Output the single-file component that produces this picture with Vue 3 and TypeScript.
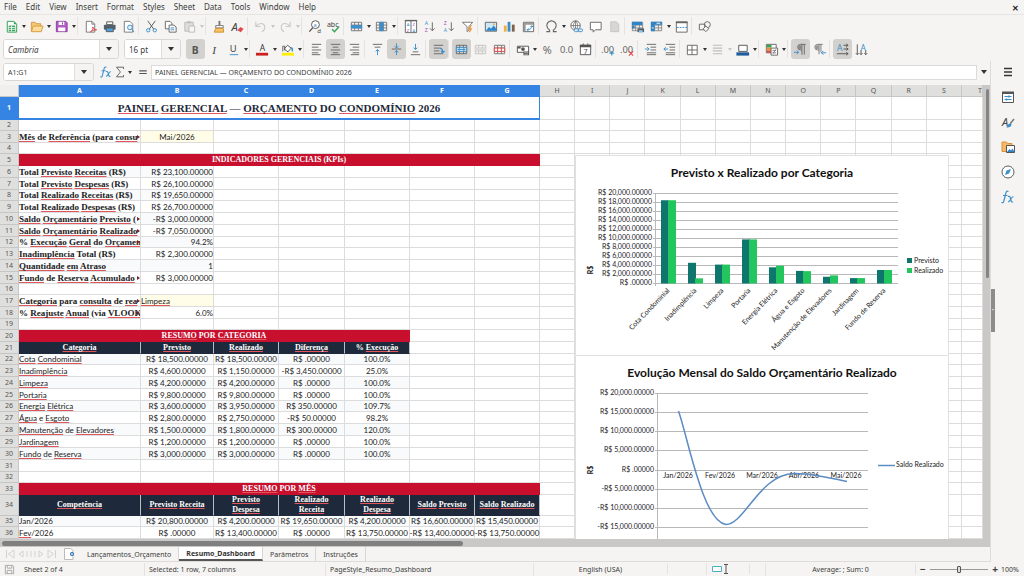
<script setup lang="ts">
import { ref } from 'vue'

interface Tool { icon?: string; label?: string; on?: boolean; drop?: boolean; sep?: boolean; off?: boolean }
interface Cell { t: string; k?: string; span?: number }

const menus = ['File', 'Edit', 'View', 'Insert', 'Format', 'Styles', 'Sheet', 'Data', 'Tools', 'Window', 'Help']

const grid = (c: string) => `<path d="M2.5 3.500h11v9h-11zM2.500 6.500h11M2.500 9.500h11M6 3.500v9M10 3.500v9" fill="none" stroke="${c}"/>`
const lines = (xs: number[][]) => xs.map(([x, y, w]) => `<path d="M${x} ${y}.5h${w}" stroke="#666"/>`).join('')

const icons: Record<string, string> = {
  new: '<path d="M3.500 2.500h7l3 3v8.500h-10z" fill="#fff" stroke="#2f9e55"/><path d="M10.500 2.500v3h3z" fill="#2f9e55"/><path d="M5 7h7v6H5z" fill="#3aa660"/><path d="M5 9h7M5 11h7M8 7v6" stroke="#fff" stroke-width=".8"/>',
  open: '<path d="M2.500 13V3.500h4l1 1.500h5v3" fill="#f3c878" stroke="#d99a3c"/><path d="M2.500 13.500l2-6h10.500l-2 6z" fill="#fbdc9b" stroke="#d99a3c"/>',
  save: '<path d="M2.500 2.500h10l1.500 1.500v9.500H2.500z" fill="#b35cc4" stroke="#8f3aa3"/><path d="M5 3h6v3.500H5zM4.500 9h7.500v4H4.500z" fill="#fff"/><path d="M9 3.500v2.500" stroke="#8f3aa3"/>',
  pdf: '<path d="M3.500 2.500h6l3 3v8.500h-9z" fill="#fff" stroke="#777"/><path d="M9.500 2.500v3h3" fill="none" stroke="#777"/><path d="M8 13.500c2-1 3-3 2.500-5 .5 2 2 3 4 3-2 0-4 .5-6.500 2z" fill="none" stroke="#d8423f"/>',
  print: '<path d="M5 3h6.500v3H5z" fill="#fff" stroke="#555"/><rect x="2" y="6" width="12.500" height="5.500" rx="1" fill="#566069"/><path d="M4.500 9.500h7.500v4H4.500z" fill="#4aa3df" stroke="#555"/>',
  preview: '<path d="M3.500 2.500h6l3 3v8.500h-9z" fill="#fff" stroke="#777"/><circle cx="9.500" cy="9" r="2.500" fill="#e1f1fb" stroke="#3b8fcb"/><path d="M11.500 11l2.500 3" stroke="#3b8fcb"/>',
  cut: '<path d="M4 2l6.500 9M12 2L5.500 11" stroke="#555"/><circle cx="4.500" cy="12" r="1.800" fill="none" stroke="#3b8fcb"/><circle cx="11.500" cy="12" r="1.800" fill="none" stroke="#3b8fcb"/>',
  copy: '<path d="M2.500 2.500h5l2 2v6h-7z" fill="#fff" stroke="#666"/><path d="M6.500 6.500h5l2.500 2v5.500H6.500z" fill="#fff" stroke="#666"/><path d="M8 9.500h4M8 11.500h4" stroke="#3b8fcb"/>',
  paste: '<path d="M3 3.500h9v9.500H3z" fill="#ddd" stroke="#bbb"/><path d="M5.500 2.500h4v2h-4z" fill="#bbb"/><path d="M7.500 7.500h6v6.500h-6z" fill="#f6f6f6" stroke="#bbb"/>',
  clone: '<path d="M8 2h2v5H8z" fill="#777"/><path d="M5 7h8v2.500H5z" fill="#fff" stroke="#777"/><path d="M5 10h8l.5 4H3.500z" fill="#f6c667" stroke="#d28f2c"/>',
  clear: '<text x="1.500" y="13" font-size="12" font-style="italic" fill="#444">A</text><path d="M8 12l3-3.500 3.500 2-3 3.500z" fill="#e0484e"/>',
  undo: '<path d="M3 3v5h5M3.500 7.500C6 4 12 3.500 12.500 8c.3 2.500-1 4.500-3 5.500" fill="none" stroke="#c9c9c9" stroke-width="1.200"/>',
  redo: '<path d="M13 3v5H8M12.500 7.500C10 4 4 3.500 3.500 8c-.3 2.500 1 4.500 3 5.500" fill="none" stroke="#c9c9c9" stroke-width="1.200"/>',
  find: '<circle cx="9" cy="6" r="4.200" fill="#fff" stroke="#555"/><path d="M6 9.500L2.500 13.500" stroke="#555" stroke-width="1.500"/><text x="7" y="8" font-size="6" fill="#3b8fcb">a</text><text x="11" y="15" font-size="6.500" fill="#444">d</text>',
  spell: '<text x="1" y="8" font-size="7.500" fill="#444">abc</text><path d="M6.500 11l2.500 2.500 5-5.500" fill="none" stroke="#35a35a" stroke-width="1.500"/>',
  row: grid('#777') + '<path d="M2 6.500h12v3.500H2z" fill="#3b8fcb"/>',
  col: grid('#777') + '<path d="M6 3h4v10H6z" fill="#3b8fcb"/>',
  sort: '<path d="M2.500 1.500h12v13h-12zM8.500 2v12" fill="#fff" stroke="#666"/><path d="M2 1h13v1.500H2z" fill="#666"/><text x="4" y="7.500" font-size="4.500" fill="#3b8fcb">A</text><text x="4" y="13.700" font-size="4.500" fill="#a44ab8">Z</text><text x="10" y="7.500" font-size="4.500" fill="#a44ab8">Z</text><text x="10" y="13.700" font-size="4.500" fill="#3b8fcb">A</text>',
  asc: '<text x="3" y="6.500" font-size="5.500" fill="#3b8fcb">A</text><text x="3" y="14" font-size="5.500" fill="#a44ab8">Z</text><path d="M11 3.500v9M8.500 10l2.500 2.500 2.500-2.500" fill="none" stroke="#666"/>',
  desc: '<text x="3" y="6.500" font-size="5.500" fill="#a44ab8">Z</text><text x="3" y="14" font-size="5.500" fill="#3b8fcb">A</text><path d="M11 3.500v9M8.500 10l2.500 2.500 2.500-2.500" fill="none" stroke="#666"/>',
  filter: '<path d="M2.500 3.500h11L9.500 8v4l-2 1.500V8z" fill="#fff" stroke="#777"/><path d="M12 6.500L9.500 10.500h2.500L10 14" fill="none" stroke="#f0912f" stroke-width="1.300"/>',
  image: '<path d="M2.500 3.500h12v9.500h-12z" fill="#cfe8f8" stroke="#666"/><path d="M3 12.500l3.500-4 2 2 3-3.500 3 4v1.500z" fill="#2f84c6"/><circle cx="11.500" cy="5.500" r="1" fill="#f5a742"/>',
  chart: '<path d="M2 7h3v6.500H2z" fill="#f0b03e"/><path d="M6 3h3v10.500H6z" fill="#3b8fcb"/><path d="M10.500 6h3v7.500h-3z" fill="#80604a"/>',
  pivot: '<path d="M2.500 3.500h11v10h-11z" fill="#fff" stroke="#666"/><path d="M3 4h10v2H3zM3 4h2v9H3z" fill="#9a9a9a"/><path d="M6.500 11.500c3 0 4.500-1 5-4M10 8.500L11.500 7l1.500 2M8 10l-1.500 1.500L8 13" fill="none" stroke="#3b8fcb"/>',
  omega: '<path d="M2.500 13.500h3.500v-1.500C4 10.500 3 9 3 7a5 5 0 0110 0c0 2-1 3.500-3 5v1.500h3.500" fill="none" stroke="#666" stroke-width="1.200"/>',
  link: '<circle cx="7" cy="7" r="5" fill="#fff" stroke="#666"/><path d="M2 7h10M7 2v10M7 2C4 5 4 9 7 12M7 2c3 3 3 7 0 10" fill="none" stroke="#666" stroke-width=".8"/><path d="M6 10.500h9v3H6z" fill="#f5f4f2"/><rect x="5.500" y="10.500" width="5" height="3" rx="1.500" fill="none" stroke="#3b8fcb"/><rect x="9.500" y="10.500" width="5" height="3" rx="1.500" fill="none" stroke="#3b8fcb"/>',
  comment: '<path d="M2.500 3.500h11.500v8H8l-2.500 2.500v-2.500h-3z" fill="#fff" stroke="#666"/>',
  headfoot: '<path d="M4 3h6l2.500 2.500V13.500H4z" fill="#d6d6d6" stroke="#c4c4c4"/>',
  area: grid('#888') + '<path d="M2 3h11v3.500H2zM2 7h3v3H2z" fill="#2f84c6"/><path d="M8 10h7v4H8z" fill="#566069"/><path d="M9.500 12h4v2.500h-4z" fill="#8fc8ee"/>',
  freeze: grid('#888') + '<path d="M2 3h12v3H2zM2 3h4v10H2z" fill="#2f84c6"/><path d="M3 9.500h2M8 4.500h4" stroke="#fff"/>',
  split: '<path d="M2.500 3.500h11.500v10.500H2.500z" fill="#fff" stroke="#666"/><path d="M2 2.500h12.500v2H2z" fill="#666"/><path d="M3 9h11" stroke="#3b8fcb" stroke-dasharray="2 1"/>',
  shapes: '<path d="M2.500 5.500h6v6h-6z" fill="none" stroke="#666"/><circle cx="11" cy="6" r="3.200" fill="none" stroke="#666"/><path d="M9.500 7.500l3 3-3 3-3-3z" fill="#f5f4f2" stroke="#666"/>',
  bold: '<text x="4" y="12.500" font-size="11" font-weight="700" fill="#555">B</text>',
  italic: '<text x="5.500" y="12.500" font-size="12" font-style="italic" font-family="Liberation Serif, serif" fill="#444">I</text>',
  underline: '<text x="4" y="11" font-size="10" fill="#444">U</text><path d="M4 13.500h9" stroke="#3b8fcb"/>',
  color: '<text x="5" y="10" font-size="9" fill="#333">A</text><path d="M1 11.500h13v3H1z" fill="#c9211e"/>',
  fill: '<path d="M3 10V4.500h2V9M8 3.500l4 3-3.500 4-4-3z" fill="#fff" stroke="#555"/><path d="M12 6c1.500 1 1.500 2.500 1 4" fill="none" stroke="#3b8fcb" stroke-width="1.500"/><path d="M2 11.500h13v3H2z" fill="#ffee00"/>',
  left: lines([[3, 2, 10], [3, 5, 7], [3, 8, 10], [3, 11, 7], [3, 13, 9]]),
  center: lines([[3, 2, 10], [5, 5, 6], [3, 8, 10], [5, 11, 6], [3, 13, 10]]),
  right: lines([[3, 2, 10], [6, 5, 7], [3, 8, 10], [6, 11, 7], [4, 13, 9]]),
  top: lines([[3, 2, 10], [5, 5, 6]]) + '<path d="M8 14V8M6 10l2-2 2 2" fill="none" stroke="#3b8fcb"/>',
  middle: lines([[3, 7, 10]]) + '<path d="M8 1.500v5M6 4.500l2 2 2-2M8 14V9M6 11l2-2 2 2" fill="none" stroke="#3b8fcb"/>',
  bottom: lines([[5, 10, 6], [3, 13, 10]]) + '<path d="M8 2v6M6 6l2 2 2-2" fill="none" stroke="#3b8fcb"/>',
  wrap: lines([[3, 3, 10], [3, 6, 6], [3, 9, 6], [3, 12, 10]]) + '<path d="M9 6.500c3 0 3.500 2 3.500 4.500M10.500 9.500l2 2 2-2" fill="none" stroke="#3b8fcb" stroke-width="1.300"/>',
  merge: grid('#666') + '<path d="M2.500 6h11v4h-11z" fill="#d8ecf9" stroke="#3b8fcb"/><path d="M4 8h8M6 6.500L4.500 8 6 9.500M10 6.500L11.500 8 10 9.500" fill="none" stroke="#3b8fcb"/>',
  mergec: '<g opacity=".45">' + grid('#888') + '<path d="M2 6h12v4H2z" fill="#bbb"/></g>',
  unmerge: grid('#777') + '<path d="M2.500 6.500h11v3.500h-11zM6 6.500V10M10 6.500V10" fill="#fff" stroke="#d8423f"/>',
  currency: '<path d="M2.500 4.500h12v6.500h-12z" fill="#fff" stroke="#555"/><circle cx="8.500" cy="7.500" r="2" fill="#555"/><path d="M3 5h3v2H3zM9 10h6v4H9z" fill="#555"/><path d="M10 11h4M10 13h4" stroke="#fff" stroke-width=".6"/>',
  percent: '<text x="3" y="12.500" font-size="11.500" fill="#666">%</text>',
  number: '<text x="1" y="12" font-size="10" fill="#666">0.0</text>',
  date: '<path d="M2.500 3.500h11v10h-11z" fill="#fff" stroke="#555"/><path d="M2 3h12v2.500H2zM5 1.500h1v2H5zM10 1.500h1v2h-1z" fill="#555"/><text x="6" y="12.500" font-size="7" fill="#444">7</text>',
  adddec: '<text x="0" y="11.500" font-size="10" fill="#666">.00</text><path d="M9 12h5M11.500 9.500v5" stroke="#3b8fcb" stroke-width="1.200"/>',
  deldec: '<text x="0" y="11.500" font-size="10" fill="#666">.00</text><path d="M9.500 10l4.500 4.500M14 10l-4.500 4.500" stroke="#e0484e" stroke-width="1.200"/>',
  indent: lines([[4, 2, 10], [8, 5, 6], [8, 8, 6], [4, 11, 10], [4, 13, 10]]) + '<path d="M2 7.500h4.500M4.500 5.500l2 2-2 2" fill="none" stroke="#3b8fcb"/>',
  outdent: lines([[4, 2, 10], [8, 5, 6], [8, 8, 6], [4, 11, 10], [4, 13, 10]]) + '<path d="M6.500 7.500H2M4 5.500l-2 2 2 2" fill="none" stroke="#3b8fcb"/>',
  borders: '<path d="M2.500 3.500h10.500v10H2.500zM2.500 8.500H13M7.500 3.500v10" fill="#fff" stroke="#666"/>',
  style: '<path d="M3 3.500h10M3 6.500h10M3 9.500h10M3 12.500h10" stroke="#bdbdbd" stroke-width="1.200"/>',
  bcolor: '<path d="M4 3.500h9v6.500H4z" fill="#fff" stroke="#555"/><path d="M1.500 11h13.500v3.500H1.500z" fill="#1f5c9e"/>',
  cond: '<path d="M2.500 2.500h10.500v9H2.500z" fill="#fff" stroke="#666"/><path d="M3 3h5v3H3z" fill="#35a35a"/><path d="M3 6h5v3H3z" fill="#f0912f"/><path d="M3 9h5v2.500H3z" fill="#e0484e"/><path d="M7.500 6.500h7v7.500h-7z" fill="#fff" stroke="#666"/><path d="M9 9h4M9 11.500h4M12.500 8l-3 4.500" stroke="#666" stroke-width=".8"/>',
  ltr: '<path d="M13.500 2.500H8a3 3 0 000 6h1.500M9.500 2.500V13.500M12 2.500v11" fill="none" stroke="#666"/><path d="M5.500 3.500h4v4h-4z" fill="#888"/><path d="M1 11h5M4 9l2 2-2 2" fill="none" stroke="#3b8fcb"/>',
  rtl: '<path d="M11.500 2.500H6a3 3 0 000 6h1.500M7.500 2.500V13M9.500 2.500v8" fill="none" stroke="#777"/><path d="M3.500 3.500h4v4h-4z" fill="#999"/><path d="M15 11.500h-5M12 9.500l-2 2 2 2" fill="none" stroke="#3b8fcb"/>',
  hor: '<text x="2" y="10" font-size="9" fill="#3b8fcb">A</text><path d="M9 3.500h5M9 7.500h5M2 12.500h12M12 2l2 1.500L12 5M12 6l2 1.500L12 9M12 11l2 1.500-2 1.500" fill="none" stroke="#555"/>',
  vert: '<text x="7" y="10" font-size="9" fill="#3b8fcb">A</text><path d="M3.500 2.500V13.500M2 12l1.500 1.500L5 12M7.500 9v4.500M12.500 9v4.500M6 12l1.500 1.500L9 12M11 12l1.500 1.500L14 12" fill="none" stroke="#555"/>',
  menu: '<path d="M4 4.500h8M4 8h8M4 11.500h8" stroke="#333" stroke-width="1.500"/>',
  props: '<path d="M2.500 3.500h11v10h-11z" fill="#fff" stroke="#555"/><path d="M2 2.500h12v2.500H2z" fill="#555"/><path d="M4.500 7.500h7M4.500 10.500h7" stroke="#3b8fcb"/><path d="M9 6.500v2M6.500 9.500v2" stroke="#3b8fcb" stroke-width="1.500"/>',
  styles: '<text x="2" y="11.500" font-size="11" font-style="italic" fill="#444">A</text><path d="M14 5l-4 5" stroke="#777" stroke-width="1.500"/><path d="M10.500 9.500c-2 .5-3.500 1-4 4 2.500.5 5-1 5-3z" fill="#3b8fcb"/>',
  gallery: '<path d="M2 12.500V3h4.500l1 1.500H12V12.500z" fill="#f5b866" stroke="#dc9238"/><path d="M6.500 6.500h8v7h-8z" fill="#fff" stroke="#555"/><path d="M7 13l2.500-3 1.500 1.500 1.500-2 2 3.500z" fill="#2f84c6"/>',
  navigator: '<circle cx="8" cy="8" r="6" fill="#fff" stroke="#566069"/><path d="M11 5L9 9.500 5 11l1.500-4.500z" fill="#3b8fcb"/>',
  fx: '<path d="M8.500 2.500c-2-1-2.500.5-3 3L4 11.500c-.4 2-1 2.500-2.500 2M3 6.500h4.500" fill="none" stroke="#3b8fcb" stroke-width="1.200"/><path d="M8 7.500c1.500-.5 2 0 2.500 2l.5 2c.4 1.500 1 1.800 2 1.300M13.500 7.500c-2 0-3.500 5.500-5.500 5.500" fill="none" stroke="#3b8fcb" stroke-width="1.200"/>',
  sum: '<path d="M12 4.500V2.500H4L8.500 8 4 13.500h8v-2" fill="none" stroke="#555"/>',
  equals: '<path d="M3 6.500h10M3 10h10" stroke="#555" stroke-width="1.400"/>',
}

const S: Tool = { sep: true }
const b = (icon: string, label: string, extra: Partial<Tool> = {}): Tool => ({ icon, label, ...extra })
const D = { drop: true }

const bar1: Tool[] = [
  b('new', 'New', D), b('open', 'Open', D), b('save', 'Save', D), S,
  b('pdf', 'Export as PDF'), b('print', 'Print'), b('preview', 'Print Preview'), S,
  b('cut', 'Cut'), b('copy', 'Copy'), b('paste', 'Paste', { drop: true, off: true }), S,
  b('clone', 'Clone Formatting'), b('clear', 'Clear Formatting'), S,
  b('undo', 'Undo', { drop: true, off: true }), b('redo', 'Redo', { drop: true, off: true }), S,
  b('find', 'Find and Replace'), b('spell', 'Spelling'), S,
  b('row', 'Row', D), b('col', 'Column', D), S,
  b('sort', 'Sort'), b('asc', 'Sort Ascending'), b('desc', 'Sort Descending'), b('filter', 'AutoFilter'), S,
  b('image', 'Insert Image'), b('chart', 'Insert Chart'), b('pivot', 'Insert Pivot Table'), S,
  b('omega', 'Special Character', D), b('link', 'Insert Hyperlink'), b('comment', 'Insert Comment'), b('headfoot', 'Headers and Footers', { off: true }), S,
  b('area', 'Define Print Area'), b('freeze', 'Freeze Rows and Columns', D), b('split', 'Split Window'), S,
  b('shapes', 'Show Draw Functions'),
]
const bar2: Tool[] = [
  b('bold', 'Bold', { on: true }), b('italic', 'Italic'), b('underline', 'Underline', D), S,
  b('color', 'Font Color', D), b('fill', 'Background Color', D), S,
  b('left', 'Align Left'), b('center', 'Align Center', { on: true }), b('right', 'Align Right'), S,
  b('top', 'Align Top'), b('middle', 'Center Vertically', { on: true }), b('bottom', 'Align Bottom'), S,
  b('wrap', 'Wrap Text', { on: true }), S,
  b('merge', 'Merge and Center', { on: true }), b('mergec', 'Merge Cells', { off: true }), b('unmerge', 'Unmerge Cells'), S,
  b('currency', 'Format as Currency', D), b('percent', 'Format as Percent'), b('number', 'Format as Number'), b('date', 'Format as Date'), S,
  b('adddec', 'Add Decimal Place'), b('deldec', 'Delete Decimal Place'), S,
  b('indent', 'Increase Indent'), b('outdent', 'Decrease Indent'), S,
  b('borders', 'Borders', D), b('style', 'Border Style', { drop: true, off: true }), b('bcolor', 'Border Color', D), S,
  b('cond', 'Conditional', D), S,
  b('ltr', 'Left-To-Right', { on: true }), b('rtl', 'Right-To-Left'), S,
  b('hor', 'Text direction left to right', { on: true }), b('vert', 'Text direction top to bottom'),
]
const side = [['menu', 'Sidebar Settings'], ['props', 'Properties'], ['styles', 'Styles'], ['gallery', 'Gallery'], ['navigator', 'Navigator'], ['fx', 'Functions']]

const cols = 'ABCDEFGHIJKLMNOPQRST'.split('')
const short = new Set([2, 4, 8, 12, 16, 19, 22, 26, 32, 35])

// Asterisks enclose words flagged by the spell checker.
const kpi = (label: string, value: string, cut = false): Cell[] => [{ t: label, k: cut ? 'lab cut' : 'lab' }, { t: value, k: 'num' }]
const cat = (name: string, a: string, r: string, d: string, p: string): Cell[] =>
  [{ t: name, k: 'txt' }, ...[a, r, d].map(v => ({ t: money(v), k: 'mid' })), { t: p, k: 'mid' }]
function money(v: string) {
  return v.startsWith('-') ? `-R$ ${v.slice(1)}.00000` : `R$ ${v}.00000`
}
const heads = (...names: string[]): Cell[] => names.map(n => ({ t: n, k: 'head' }))

const data: Record<number, Cell[]> = {
  1: [{ t: '*PAINEL* *GERENCIAL* — *ORÇAMENTO* DO *CONDOMÍNIO* 2026', k: 'title', span: 7 }],
  3: [{ t: '*Mês* de *Referência* (para *consu*', k: 'lab cut' }, { t: 'Mai/2026', k: 'mid yellow' }],
  5: [{ t: 'INDICADORES GERENCIAIS (KPIs)', k: 'band', span: 7 }],
  6: kpi('Total *Previsto* *Receitas* (R$)', 'R$ 23,100.00000'),
  7: kpi('Total *Previsto* *Despesas* (R$)', 'R$ 26,100.00000'),
  8: kpi('Total *Realizado* *Receitas* (R$)', 'R$ 19,650.00000'),
  9: kpi('Total *Realizado* *Despesas* (R$)', 'R$ 26,700.00000'),
  10: kpi('*Saldo* *Orçamentário* *Previsto* (', '-R$ 3,000.00000', true),
  11: kpi('*Saldo* *Orçamentário* *Realizado*', '-R$ 7,050.00000', true),
  12: kpi('% *Execução* *Geral* do *Orçamen*', '94.2%', true),
  13: kpi('*Inadimplência* Total (R$)', 'R$ 2,300.00000'),
  14: kpi('*Quantidade* *em* *Atraso*', '1'),
  15: kpi('*Fundo* de *Reserva* *Acumulado*', 'R$ 3,000.00000', true),
  17: [{ t: '*Categoria* para *consulta* de *rea*', k: 'lab cut' }, { t: '*Limpeza*', k: 'txt yellow' }],
  18: [{ t: '% *Reajuste* *Anual* (via *VLOOKP*', k: 'lab cut' }, { t: '6.0%', k: 'num' }],
  20: [{ t: '*RESUMO* POR *CATEGORIA*', k: 'band', span: 5 }],
  21: heads('*Categoria*', '*Previsto*', '*Realizado*', '*Diferença*', '% *Execução*'),
  22: cat('*Cota* *Condominial*', '18,500', '18,500', '', '100.0%'),
  23: cat('*Inadimplência*', '4,600', '1,150', '-3,450', '25.0%'),
  24: cat('*Limpeza*', '4,200', '4,200', '', '100.0%'),
  25: cat('*Portaria*', '9,800', '9,800', '', '100.0%'),
  26: cat('*Energia* *Elétrica*', '3,600', '3,950', '350', '109.7%'),
  27: cat('*Água* e *Esgoto*', '2,800', '2,750', '-50', '98.2%'),
  28: cat('*Manutenção* de *Elevadores*', '1,500', '1,800', '300', '120.0%'),
  29: cat('*Jardinagem*', '1,200', '1,200', '', '100.0%'),
  30: cat('*Fundo* de *Reserva*', '3,000', '3,000', '', '100.0%'),
  33: [{ t: '*RESUMO* POR *MÊS*', k: 'band', span: 7 }],
  34: heads('*Competência*', '*Previsto* *Receita*', '*Previsto*\n*Despesa*', '*Realizado*\n*Receita*', '*Realizado*\n*Despesa*', '*Saldo* *Previsto*', '*Saldo* *Realizado*'),
  35: [{ t: 'Jan/2026', k: 'txt' }, ...['20,800', '4,200', '19,650', '4,200', '16,600', '15,450'].map(v => ({ t: money(v), k: 'mid' }))],
  36: [{ t: '*Fev*/2026', k: 'txt' }, ...['', '13,400', '', '13,750', '-13,400', '-13,750'].map(v => ({ t: money(v), k: 'mid' }))],
}
const tinted = (n: number) => (n >= 6 && n <= 14 && n % 2 === 0) || (n >= 22 && n <= 30 && n % 2 === 0) || n === 35

const rows = Array.from({ length: 36 }, (_, i) => {
  const n = i + 1
  const cells = data[n] ?? []
  const used = cells.reduce((s, c) => s + (c.span ?? 1), 0)
  return { n, cells, blanks: 20 - used }
})
const parts = (t: string) => t.split('*').map((s, i) => ({ s, bad: i % 2 === 1 })).filter(p => p.s)

const bars = [
  ['Cota Condominial', 18500, 18500], ['Inadimplência', 4600, 1150], ['Limpeza', 4200, 4200],
  ['Portaria', 9800, 9800], ['Energia Elétrica', 3600, 3950], ['Água e Esgoto', 2800, 2750],
  ['Manutenção de Elevadores', 1500, 1800], ['Jardinagem', 1200, 1200], ['Fundo de Reserva', 3000, 3000],
] as [string, number, number][]
const axis1 = Array.from({ length: 11 }, (_, i) => {
  const v = 20 - i * 2
  return { y: 38 + i * 9, t: money(v ? `${v},000` : '') }
})
const axis2 = [20, 15, 10, 5, 0, -5, -10, -15].map((v, i) => ({ y: 38 + Math.round(i * 19.15), t: money(v ? `${v},000` : '') }))
const months = ['Jan', 'Fev', 'Mar', 'Abr', 'Mai']
const px = (v: number) => v * 90 / 20000

const font = ref('Cambria')
const size = ref('16 pt')
const cellRef = ref('A1:G1')
const formula = ref('PAINEL GERENCIAL — ORÇAMENTO DO CONDOMÍNIO 2026')
const zoom = ref(50)
</script>

<template>
  <div class="app">
    <header class="menubar">
      <nav class="menus"><button v-for="m in menus" :key="m">{{ m }}</button></nav>
      <button class="close" aria-label="Close">✕</button>
    </header>

    <div class="toolbar one" role="toolbar" aria-label="Standard">
      <template v-for="(t, i) in bar1" :key="i">
        <span v-if="t.sep" class="sep"></span>
        <template v-else>
          <button class="tool" :class="{ on: t.on }" :aria-label="t.label"><svg viewBox="0 0 16 16" v-html="icons[t.icon!]"></svg></button>
          <button v-if="t.drop" class="drop" :class="{ off: t.off }" :aria-label="t.label + ' options'"></button>
        </template>
      </template>
    </div>

    <div class="toolbar two" role="toolbar" aria-label="Formatting">
      <div class="combo font"><input v-model="font" aria-label="Font name"><button aria-label="Choose font"></button></div>
      <div class="combo size"><input v-model="size" aria-label="Font size"><button aria-label="Choose size"></button></div>
      <template v-for="(t, i) in bar2" :key="i">
        <span v-if="t.sep" class="sep"></span>
        <template v-else>
          <button class="tool" :class="{ on: t.on }" :aria-label="t.label"><svg viewBox="0 0 16 16" v-html="icons[t.icon!]"></svg></button>
          <button v-if="t.drop" class="drop" :class="{ off: t.off }" :aria-label="t.label + ' options'"></button>
        </template>
      </template>
    </div>

    <div class="body">
      <main class="main">
        <div class="formulabar">
          <div class="combo name"><input v-model="cellRef" aria-label="Name box"><button aria-label="Choose range"></button></div>
          <button class="fbtn" aria-label="Function wizard"><svg viewBox="0 0 16 16" v-html="icons.fx"></svg></button>
          <button class="fbtn sum" aria-label="Select function"><svg viewBox="0 0 16 16" v-html="icons.sum"></svg></button>
          <button class="drop" aria-label="Function list"></button>
          <button class="fbtn eq" aria-label="Formula"><svg viewBox="0 0 16 16" v-html="icons.equals"></svg></button>
          <input v-model="formula" class="formula" aria-label="Formula input">
          <button class="expand" aria-label="Expand formula bar"></button>
        </div>

        <div class="sheetrow">
          <div class="sheet">
            <table>
              <colgroup>
                <col class="c0"><col class="ca"><col class="cb"><col class="cc"><col class="cd"><col class="cc"><col class="cc"><col class="cc">
                <col v-for="n in 12" :key="n"><col class="ct">
              </colgroup>
              <thead>
                <tr>
                  <th class="corner"></th>
                  <th v-for="(c, i) in cols" :key="c" :class="{ sel: i < 7, last: i === 19 }">{{ c }}</th>
                </tr>
              </thead>
              <tbody>
                <tr v-for="r in rows" :key="r.n" :class="{ short: short.has(r.n), first: r.n === 1, tall: r.n === 34, tint: tinted(r.n) }">
                  <th :class="{ sel: r.n === 1 }">{{ r.n }}</th>
                  <td v-for="(c, i) in r.cells" :key="i" :class="c.k" :colspan="c.span ?? 1"><div class="cell"><span class="val"><span v-for="(p, j) in parts(c.t)" :key="j" :class="{ bad: p.bad }">{{ p.s }}</span></span></div></td>
                  <td v-for="k in r.blanks" :key="'b' + k"></td>
                </tr>
              </tbody>
            </table>

            <div class="charts">
              <svg class="chart" viewBox="0 0 374 200" role="img" aria-label="Previsto x Realizado por Categoria">
                <path class="edge" d="M.5 200V.5h373V200" />
                <text class="ctitle" x="187" y="22">Previsto x Realizado por Categoria</text>
                <g v-for="a in axis1" :key="a.y">
                  <path class="gl" :d="`M78 ${a.y}.5h245`" />
                  <text class="ax" x="77" :y="a.y + 2">{{ a.t }}</text>
                </g>
                <path class="gl" d="M80.500 38v93" />
                <g v-for="(d, i) in bars" :key="d[0]">
                  <rect :x="86 + i * 27" :y="128.500 - px(d[1])" width="8" :height="px(d[1])" fill="#0f766e" />
                  <rect :x="93 + i * 27" :y="128.500 - px(d[2])" width="8" :height="px(d[2])" fill="#22c55e" />
                  <text class="rot" :transform="`translate(${95 + i * 27} 136) rotate(-46)`">{{ d[0] }}</text>
                </g>
                <text class="unit" transform="translate(18 115) rotate(-90)">R$</text>
                <rect x="332" y="103" width="5" height="5" fill="#0f766e" /><text class="leg" x="339" y="108">Previsto</text>
                <rect x="332" y="113" width="5" height="5" fill="#22c55e" /><text class="leg" x="339" y="118">Realizado</text>
              </svg>
              <svg class="chart" viewBox="0 0 374 200" role="img" aria-label="Evolução Mensal do Saldo Orçamentário Realizado">
                <path class="edge" d="M.5 200V.5h373V200" />
                <text class="ctitle" x="187" y="22">Evolução Mensal do Saldo Orçamentário Realizado</text>
                <g v-for="a in axis2" :key="a.y">
                  <path class="gl" :d="`M80 ${a.y}.5h213`" />
                  <text class="ax" x="79" :y="a.y + 2">{{ a.t }}</text>
                </g>
                <path class="gl" d="M82.500 38v162" />
                <text v-for="(m, i) in months" :key="m" class="mon" :x="103 + i * 42" y="123">{{ m }}/2026</text>
                <path d="M103.500 56C113 83 128 167 151 169.500 169 170 185 119 219 118.500 236 118 255 123 272 126.500" fill="none" stroke="#5b8cc4" stroke-width="1.500" />
                <text class="unit" transform="translate(18 115) rotate(-90)">R$</text>
                <path d="M303 110.500h17" stroke="#5b8cc4" stroke-width="1.500" /><text class="leg" x="321" y="112">Saldo Realizado</text>
              </svg>
            </div>
          </div>
          <div class="vscroll"><i></i></div>
        </div>
        <div class="hscroll"><i></i></div>
        <div class="tabs">
          <svg class="nav" viewBox="0 0 52 12"><path d="M1.500 2v8M9 2L3.500 6 9 10zM50.500 2v8M43 2l5.500 4-5.500 4zM18 3l-4 3 4 3zM34 3l4 3-4 3zM22 3v6M26 3v6M30 3v6" fill="none" stroke="#d3d2d0" /></svg>
          <button class="add" aria-label="Add sheet"><svg viewBox="0 0 12 12"><path d="M1.500 .500h6l2.500 2v9h-8.500z" fill="#fff" stroke="#bbb" /><circle cx="9" cy="6" r="2" fill="#2b6cb0" /><path d="M8 6h2M9 5v2" stroke="#fff" stroke-width=".7" /></svg></button>
          <button class="tab first">Lançamentos_Orçamento</button>
          <button class="tab active">Resumo_Dashboard</button>
          <button class="tab">Parâmetros</button>
          <button class="tab">Instruções</button>
        </div>
      </main>
      <aside class="sidebar">
        <button v-for="s in side" :key="s[0]" :aria-label="s[1]"><svg viewBox="0 0 16 16" v-html="icons[s[0]]"></svg></button>
        <span class="grip">•</span>
      </aside>
    </div>

    <footer class="status">
      <span class="ic"><svg viewBox="0 0 12 12"><path d="M1.500 1.500h8l1 1v8h-9zM3.500 1.500v3h5v-3M3.500 10.500V7h5v3.500" fill="none" stroke="#a6a6a6" /></svg></span>
      <span>Sheet 2 of 4</span>
      <span class="bar">Selected: 1 row, 7 columns</span>
      <span class="bar">PageStyle_Resumo_Dashboard</span>
      <span class="bar mid">English (USA)</span>
      <span class="bar"></span>
      <span class="bar ins"><svg viewBox="0 0 20 12"><path d="M1.500 3.500h9v5h-9z" fill="#fff" stroke="#4aaec4" /><path d="M13 1.500h4M13 10.500h4M15 1.500v9" stroke="#555" /></svg></span>
      <span class="bar"></span>
      <span class="bar mid">Average: ; Sum: 0</span>
      <span class="bar zoom"><button aria-label="Zoom out">−</button><input v-model="zoom" type="range" min="0" max="100" aria-label="Zoom"><button aria-label="Zoom in">+</button></span>
      <span class="pct">100%</span>
    </footer>
  </div>
</template>

<style>
html, body { margin: 0; overflow: hidden; }
</style>

<style scoped>
* { box-sizing: border-box; }
.app { display: flex; flex-direction: column; height: 100vh; background: #f5f4f2; color: #3c3c3c; font: 7px "Noto Sans", "Open Sans", sans-serif; }
button { border: 0; padding: 0; margin: 0; background: none; color: inherit; font: inherit; }
input { font: inherit; color: inherit; margin: 0; min-width: 0; }
svg { display: block; font-family: "Noto Sans", sans-serif; }

.menubar { flex: none; height: 15px; display: flex; align-items: center; justify-content: space-between; padding: 0 5px 0 4px; border-bottom: 1px solid #e6e5e3; font-size: 8px; }
.menus { display: flex; gap: 9px; }
.menus button { line-height: 14px; white-space: nowrap; }
.close { font-size: 8px; font-weight: 700; width: 8px; color: #222; }

.toolbar { flex: none; display: flex; align-items: center; padding-left: 2px; }
.one { height: 22px; }
.two { height: 24px; padding-left: 3px; }
.tool { flex: none; width: 19px; height: 20px; border-radius: 3px; display: grid; place-items: center; }
.tool svg { width: 15px; height: 15px; overflow: visible; }
.tool.on { background: #d3d1ce; }
.drop { flex: none; width: 6px; height: 16px; display: grid; place-items: center; }
.drop::after { content: ""; border: 2px solid transparent; border-top: 3px solid #333; border-bottom: 0; }
.drop.off::after { border-top-color: #c6c6c6; }
.sep { flex: none; width: 4px; height: 18px; border-left: 1px solid #e4e3e1; }

.combo { flex: none; display: flex; height: 20px; border: 1px solid #d9d7d5; border-radius: 3px; background: #fff; overflow: hidden; font-size: 8px; }
.combo input { flex: 1; border: 0; padding: 0 0 0 4px; background: #fff; outline: 0; }
.combo button { width: 19px; background: #f5f4f2; border-left: 1px solid #e0dedc; display: grid; place-items: center; }
.combo button::after, .expand::after { content: ""; border: 3px solid transparent; border-top: 4px solid #333; border-bottom: 0; }
.font { width: 116px; margin-right: 5px; }
.font input { font-style: italic; }
.size { width: 57px; margin-right: 5px; }

.body { flex: 1; min-height: 0; display: flex; }
.main { flex: 1; min-width: 0; display: flex; flex-direction: column; }
.formulabar { flex: none; height: 24px; display: flex; align-items: center; padding: 0 0 2px 3px; }
.name { width: 91px; height: 18px; margin-right: 5px; font-size: 7px; }
.fbtn { width: 14px; display: grid; place-items: center; }
.fbtn svg { width: 14px; height: 14px; }
.eq { margin-left: 3px; }
.eq svg { width: 12px; height: 12px; }
.formula { flex: 1; height: 15px; border: 1px solid #dddbd9; background: #fff; padding: 0 3px; outline: 0; margin-left: 1px; }
.expand { width: 13px; display: grid; place-items: center; }

.sheetrow { flex: 1; min-height: 0; display: flex; }
.sheet { flex: 1; min-width: 0; position: relative; overflow: hidden; background: #fff; }
table { width: 100%; table-layout: fixed; border-collapse: separate; border-spacing: 0; }
.c0 { width: 19px; } .ca { width: 122px; } .cb { width: 73px; } .cc { width: 65px; } .cd { width: 66px; } .ct { width: 21px; }
tr { height: 12px; }
tr.short { height: 11px; } tr.first { height: 23px; } tr.tall { height: 21px; }
th, td { padding: 0; line-height: 10px; overflow: hidden; white-space: pre; border-right: 1px solid #dcdcdc; border-bottom: 1px solid #dcdcdc; }
th { background: #dfdfdd; color: #555; font-weight: 400; font-size: 7px; text-align: center; border-color: #c6c6c4; }
th.sel { background: #3584e4; color: #fff; font-weight: 700; border-color: #3584e4; }
th.last { text-align: right; }
th.corner { background: #f0efed; }
td { font-family: Lato, "Open Sans", sans-serif; font-size: 8px; color: #222; }
.cell { max-height: 20px; }
.mid { text-align: center; overflow: visible; }
.mid .cell { margin: 0 -3px; }
.num { text-align: right; }
.bad { text-decoration-line: underline; text-decoration-style: solid; text-decoration-color: #e0565a; text-decoration-thickness: 1px; text-underline-offset: 1px; text-decoration-skip-ink: none; }
.tint .lab, .tint .txt, .tint .num, .tint .mid { background: #f8fafc; }
.yellow { background: #fffde8; }
.lab, .title, .band, .head { font-family: "Liberation Serif", serif; font-weight: 700; font-size: 8px; }
.lab { font-size: 9px; }
.cut .cell { display: flex; align-items: center; }
.cut .val { flex: 1; min-width: 0; }
.cut .cell::after { content: ""; border: 2px solid transparent; border-left: 3px solid #7a2020; border-right: 0; }
.title { font-size: 11px; line-height: 18px; text-align: center; color: #1e293b; border: 1px solid #3584e4; border-left-width: 0; border-top: 0; border-bottom-width: 2px; }
.band { background: #c8102e; color: #fff; text-align: center; border-color: #c8102e; }
.head { background: #1e293b; color: #fff; text-align: center; border-right-color: #b8bec8; border-bottom-color: #1e293b; }

.charts { position: absolute; left: 575px; top: 70px; width: 374px; background: #fff; }
.chart { width: 374px; height: 200px; font-family: Lato, sans-serif; font-size: 7px; fill: #222; }
.edge { fill: none; stroke: #e0e0e0; }
.ctitle { font-size: 12px; font-weight: 700; text-anchor: middle; fill: #111; }
.gl { stroke: #b8b8b8; fill: none; }
.ax, .rot { text-anchor: end; }
.mon { text-anchor: middle; }
.unit { font-weight: 700; text-anchor: middle; }

.vscroll { width: 7px; background: #c9c8c6; padding: 4px 1px 0 3px; }
.vscroll i { display: block; height: 42%; background: #858585; border-radius: 2px; }
.hscroll { flex: none; height: 8px; background: #c9c8c6; padding: 2px 0 0 2px; }
.hscroll i { display: block; width: 46.7%; height: 5px; background: #808080; border-radius: 3px; }
.tabs { flex: none; height: 15px; display: flex; align-items: center; padding-left: 5px; border-bottom: 1px solid #dddcda; }
.nav { width: 52px; height: 12px; }
.add { margin: 0 5px 0 6px; }
.add svg { width: 12px; height: 12px; }
.tab { height: 14px; padding: 0 7px; border-right: 1px solid #d8d6d4; white-space: nowrap; }
.tab.active { background: #fff; font-weight: 700; border-bottom: 2px solid #555; color: #333; }

.sidebar { flex: none; width: 34px; border-left: 1px solid #dddcda; position: relative; display: flex; flex-direction: column; align-items: center; gap: 9px; padding-top: 3px; }
.sidebar button svg { width: 16px; height: 16px; }
.grip { position: absolute; left: 0; top: 228px; width: 4px; height: 43px; background: #8c8c8c; color: #fff; line-height: 43px; font-size: 5px; text-align: center; }

.status { flex: none; height: 14px; display: grid; grid-template-columns: 20fr 124fr 181fr 208fr 134fr 39fr 43fr 16fr 150fr 83fr 26fr; align-items: center; line-height: 13px; }
.status > span { min-width: 0; white-space: nowrap; padding-left: 4px; }
.status > .bar { border-left: 1px solid #e4e3e1; min-height: 10px; }
.status > .mid { text-align: center; padding: 0; }
.ic svg { width: 11px; height: 11px; }
.ins svg { width: 20px; height: 12px; }
.zoom { display: flex; align-items: center; }
.zoom button { font-size: 10px; font-weight: 700; line-height: 10px; }
.zoom input { flex: 1; appearance: none; height: 8px; background: linear-gradient(#999, #999) center / 100% 1px no-repeat; margin: 0 4px; }
.zoom input::-webkit-slider-thumb { appearance: none; width: 4px; height: 7px; border: 1px solid #555; background: #ddd; border-radius: 1px; }
.status > .pct { padding-left: 3px; }
</style>
